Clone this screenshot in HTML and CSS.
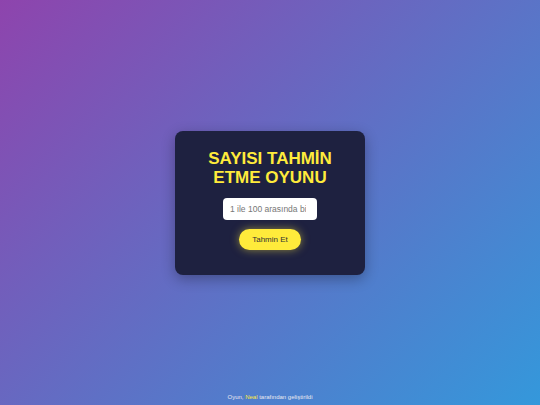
FILE: index.html
```html
<!DOCTYPE html>
<html lang="tr">
<head>
<meta charset="utf-8">
<link rel="stylesheet" href="styles.css">
</head>
<body>
<main class="card">
  <h1 class="title">SAYISI TAHMİN ETME OYUNU</h1>
  <input class="guess" type="text" placeholder="1 ile 100 arasında bir sayı girin">
  <button class="btn">Tahmin Et</button>
</main>
<footer class="footer">Oyun, <span class="author">Neal</span> tarafından geliştirildi</footer>
</body>
</html>
```

FILE: styles.css
```css
html, body {
  margin: 0;
  height: 100%;
}
body {
  font-family: "Liberation Sans", Arial, sans-serif;
  background: linear-gradient(135deg, #8e44ad 0%, #3498db 100%);
  display: flex;
  align-items: center;
  justify-content: center;
  color: #fff;
}
.card {
  width: 190px;
  box-sizing: border-box;
  padding: 18px 20px 25px;
  background: #1e2140;
  border-radius: 8px;
  box-shadow: 0 4px 14px rgba(0,0,0,0.3);
  display: flex;
  flex-direction: column;
  align-items: center;
}
.title {
  margin: 0 0 11px;
  font-size: 17px;
  line-height: 19px;
  font-weight: bold;
  color: #ffeb3b;
  text-align: center;
}
.guess {
  width: 94px;
  height: 22px;
  box-sizing: border-box;
  border: none;
  border-radius: 4px;
  padding: 0 11px 0 7px;
  font-family: "Liberation Sans", Arial, sans-serif;
  font-size: 8.5px;
  color: #333;
  background: #fff;
  outline: none;
}
.guess::placeholder { color: #777; }
.btn {
  margin-top: 9px;
  width: 62px;
  height: 21px;
  border: none;
  border-radius: 11px;
  background: #ffeb3b;
  color: #333;
  font-family: "Liberation Sans", Arial, sans-serif;
  font-size: 8px;
  font-weight: normal;
  box-shadow: 0 0 8px rgba(255,235,59,0.5);
  padding: 0;
}
.footer {
  position: absolute;
  left: 0;
  right: 0;
  bottom: 5px;
  text-align: center;
  font-size: 6px;
  color: #e8e8f0;
}
.author { color: #ffeb3b; }
```
